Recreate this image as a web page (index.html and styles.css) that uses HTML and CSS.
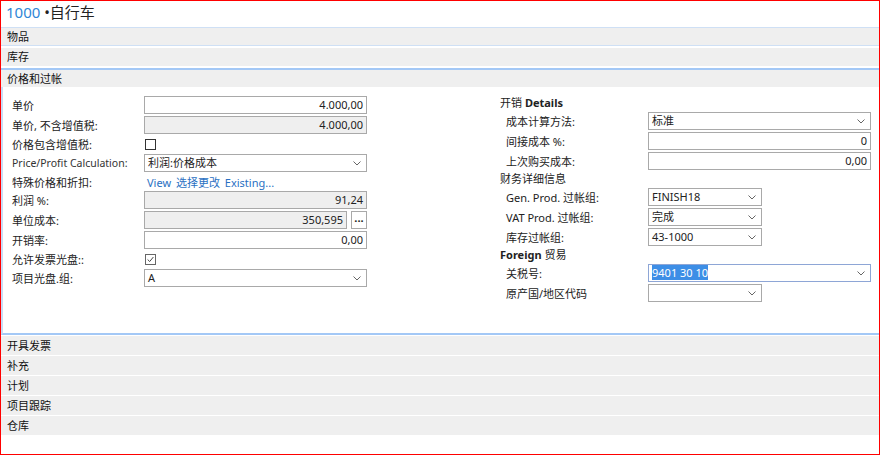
FILE: index.html
```html
<!DOCTYPE html>
<html lang="zh">
<head>
  <meta charset="UTF-8" />
  <title>1000 自行车</title>
  <link rel="stylesheet" href="styles.css">
</head>
<body>
  <div class="frame">
    <div class="title"><span class="no">1000</span> •自行车</div>

    <div class="tab tab-first">物品</div>
    <div class="tab tab-second">库存</div>
    <div class="tab tab-open">价格和过帐</div>

    <div class="panel">
      <div class="col col-left">
        <div class="row">
          <span class="label">单价</span>
          <div class="field num">4.000,00</div>
        </div>
        <div class="row">
          <span class="label">单价, 不含增值税:</span>
          <div class="field num ro">4.000,00</div>
        </div>
        <div class="row row-cb">
          <span class="label">价格包含增值税:</span>
          <span class="check"></span>
        </div>
        <div class="row">
          <span class="label label-en">Price/Profit Calculation:</span>
          <div class="field select">利润:价格成本<svg class="chev" viewBox="0 0 8 5"><path d="M0.5 0.5 L4 4 L7.5 0.5" /></svg></div>
        </div>
        <div class="row row-link">
          <span class="label">特殊价格和折扣:</span>
          <span class="links"><a>View</a> <a>选择更改</a> <a>Existing...</a></span>
        </div>
        <div class="row">
          <span class="label">利润 %:</span>
          <div class="field num ro">91,24</div>
        </div>
        <div class="row">
          <span class="label">单位成本:</span>
          <div class="field-group">
            <div class="field num ro">350,595</div>
            <span class="dots">...</span>
          </div>
        </div>
        <div class="row">
          <span class="label">开销率:</span>
          <div class="field num">0,00</div>
        </div>
        <div class="row row-cb">
          <span class="label">允许发票光盘::</span>
          <span class="check checked"><svg viewBox="0 0 11 11"><path d="M2 5.5 L4.5 8 L9 2.5" /></svg></span>
        </div>
        <div class="row">
          <span class="label">项目光盘.组:</span>
          <div class="field select">A<svg class="chev" viewBox="0 0 8 5"><path d="M0.5 0.5 L4 4 L7.5 0.5" /></svg></div>
        </div>
      </div>

      <div class="col col-right">
        <div class="group-head">开销 <b>Details</b></div>
        <div class="row">
          <span class="label">成本计算方法:</span>
          <div class="field select">标准<svg class="chev" viewBox="0 0 8 5"><path d="M0.5 0.5 L4 4 L7.5 0.5" /></svg></div>
        </div>
        <div class="row">
          <span class="label">间接成本 %:</span>
          <div class="field num">0</div>
        </div>
        <div class="row">
          <span class="label">上次购买成本:</span>
          <div class="field num">0,00</div>
        </div>
        <div class="group-head">财务详细信息</div>
        <div class="row">
          <span class="label">Gen. Prod. 过帐组:</span>
          <div class="field select short">FINISH18<svg class="chev" viewBox="0 0 8 5"><path d="M0.5 0.5 L4 4 L7.5 0.5" /></svg></div>
        </div>
        <div class="row">
          <span class="label">VAT Prod. 过帐组:</span>
          <div class="field select short">完成<svg class="chev" viewBox="0 0 8 5"><path d="M0.5 0.5 L4 4 L7.5 0.5" /></svg></div>
        </div>
        <div class="row">
          <span class="label">库存过帐组:</span>
          <div class="field select short">43-1000<svg class="chev" viewBox="0 0 8 5"><path d="M0.5 0.5 L4 4 L7.5 0.5" /></svg></div>
        </div>
        <div class="group-head"><b>Foreign</b> 贸易</div>
        <div class="row">
          <span class="label">关税号:</span>
          <div class="field select focus"><span class="sel">9401 30 10</span><svg class="chev" viewBox="0 0 8 5"><path d="M0.5 0.5 L4 4 L7.5 0.5" /></svg></div>
        </div>
        <div class="row">
          <span class="label">原产国/地区代码</span>
          <div class="field select short"><svg class="chev" viewBox="0 0 8 5"><path d="M0.5 0.5 L4 4 L7.5 0.5" /></svg></div>
        </div>
      </div>
    </div>

    <div class="tab tab-closed">开具发票</div>
    <div class="tab tab-closed">补充</div>
    <div class="tab tab-closed">计划</div>
    <div class="tab tab-closed">项目跟踪</div>
    <div class="tab tab-closed">仓库</div>
  </div>
</body>
</html>
```

FILE: styles.css
```css
html, body {
  margin: 0;
  padding: 0;
  background: #fff;
}

body {
  font-family: "Noto Sans", "Noto Sans CJK SC", sans-serif;
  font-size: 11px;
  color: #222;
}

.frame {
  width: 880px;
  height: 455px;
  box-sizing: border-box;
  border: 1px solid #ff0000;
  overflow: hidden;
}

.title {
  height: 26px;
  padding-left: 5px;
  font-size: 15px;
  line-height: 22px;
  color: #222;
}

.title .no {
  color: #2f86d6;
}

/* fast tabs */
.tab {
  background: #efefef;
  padding-left: 6px;
  line-height: 17px;
  height: 17px;
  color: #111;
}

.tab-first {
  border-top: 1px solid #cfe0f5;
  border-bottom: 1px solid #cfe0f5;
}

.tab-second {
  margin-top: 2px;
  height: 18px;
  line-height: 18px;
}

.tab-open {
  margin-top: 2px;
  border-top: 2px solid #a3c8f6;
}

.tab-closed {
  margin-top: 1px;
  height: 19px;
  line-height: 19px;
}

.panel {
  height: 248px;
  box-sizing: border-box;
  border-left: 2px solid #c9ddf6;
  border-bottom: 2px solid #a3c8f6;
  padding: 8px 0 0 9px;
  display: flex;
}

.col-left {
  width: 355px;
}

.col-right {
  width: 371px;
  margin-left: 133px;
}

.row {
  display: flex;
  align-items: center;
  height: 20px;
}

.row-cb {
  height: 18px;
}

.row-link {
  height: 17px;
}

.label {
  width: 132px;
  flex: none;
  white-space: nowrap;
}

.label-en {
  color: #333;
  font-size: 10.5px;
}

.col-right .label {
  width: 142px;
  padding-left: 6px;
}

.group-head {
  height: 16px;
  line-height: 16px;
  color: #222;
}

.group-head b {
  font-weight: 700;
}

.field {
  box-sizing: border-box;
  width: 223px;
  height: 18px;
  border: 1px solid #a9a9a9;
  background: #fff;
  padding: 0 3px;
  line-height: 16px;
  white-space: nowrap;
  color: #222;
  position: relative;
}

.field.num {
  text-align: right;
}

.field.ro {
  background: #efefef;
}

.field.select {
  padding-right: 16px;
}

.field.short {
  width: 114px;
}

.field.focus {
  border-color: #8ea6d6;
}

.sel {
  background: #3d8ee6;
  color: #fff;
}

.chev {
  position: absolute;
  right: 5px;
  top: 6px;
  width: 8px;
  height: 5px;
  fill: none;
  stroke: #666;
  stroke-width: 1;
}

.field-group {
  display: flex;
  gap: 4px;
}

.field-group .field {
  width: 203px;
}

.dots {
  box-sizing: border-box;
  width: 16px;
  height: 18px;
  border: 1px solid #a9a9a9;
  text-align: center;
  line-height: 12px;
  font-weight: 700;
}

.check {
  box-sizing: border-box;
  width: 11px;
  height: 11px;
  margin-left: 1px;
  border: 1px solid #333;
  background: #fff;
}

.check.checked {
  border-color: #666;
}

.check svg {
  display: block;
  width: 9px;
  height: 9px;
  fill: none;
  stroke: #444;
  stroke-width: 1.2;
}

.links {
  padding-left: 3px;
}

.links a {
  color: #2a70c2;
  margin-right: 2px;
}
```
